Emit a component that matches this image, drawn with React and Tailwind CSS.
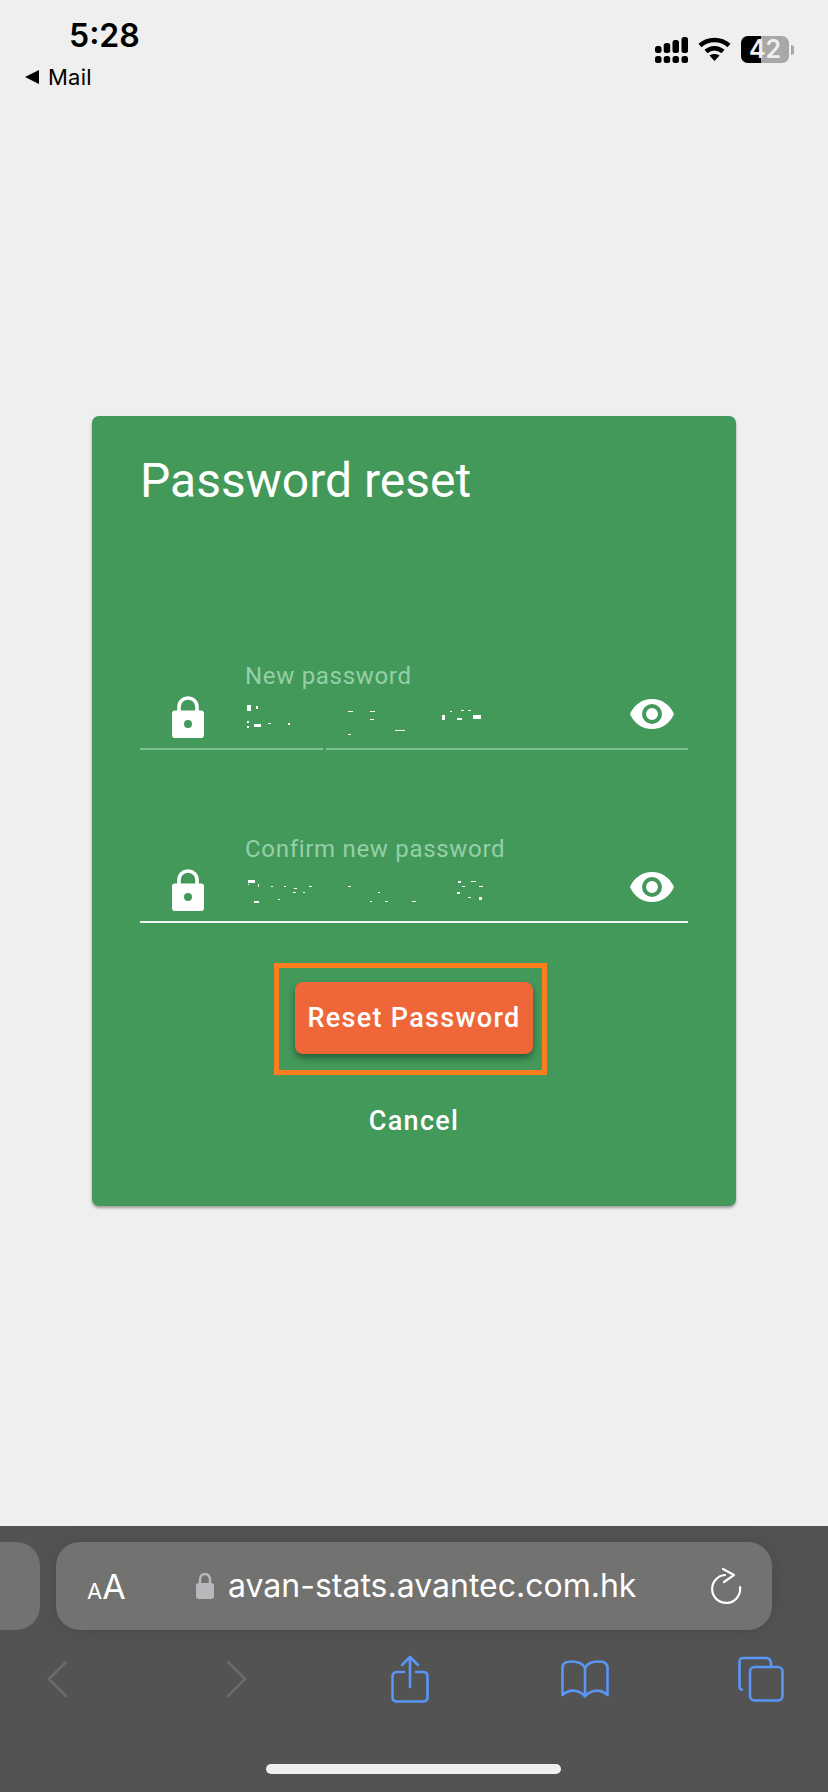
function Signal() {
  return (
    <svg width="33" height="26" viewBox="0 0 33 26" fill="#000">
      <rect x="0" y="9" width="6.5" height="7" rx="2.5" />
      <rect x="8.7" y="6" width="6.5" height="10" rx="2.5" />
      <rect x="17.5" y="3" width="6.5" height="13" rx="2.5" />
      <rect x="26.5" y="0" width="6.5" height="16" rx="2.5" />
      <rect x="0" y="19" width="6.5" height="7" rx="2.5" />
      <rect x="8.7" y="19" width="6.5" height="7" rx="2.5" />
      <rect x="17.5" y="19" width="6.5" height="7" rx="2.5" />
      <rect x="26.5" y="19" width="6.5" height="7" rx="2.5" />
    </svg>
  )
}

function Wifi() {
  return (
    <svg width="33" height="24" viewBox="0 0 33 24" fill="none" stroke="#000" strokeWidth="4.5">
      <path d="M2 8.5 C10 1 23 1 31 8.5" />
      <path d="M8 14.5 C13 10 20 10 25 14.5" />
      <path d="M16.5 24 L11.5 18.5 C14.5 16.5 18.5 16.5 21.5 18.5 Z" fill="#000" stroke="none" />
    </svg>
  )
}

function Battery() {
  return (
    <div className="flex items-center">
      <div className="relative flex h-[27px] w-[48px] items-center justify-center rounded-[7px] bg-[#a8a8a8]">
        <div className="absolute inset-y-0 left-0 w-[20px] rounded-l-[7px] bg-black" />
        <span className="relative text-[25px] leading-[27px] font-semibold text-[#efefef] font-['Inter',sans-serif]">42</span>
      </div>
      <div className="ml-[2px] h-[10px] w-[3px] rounded-r-full bg-[#a8a8a8]" />
    </div>
  )
}

function LockIcon() {
  return (
    <svg width="32" height="42" viewBox="0 0 32 42" fill="#fff">
      <path d="M7 16 V11 C7 5.5 11 2 16 2 C21 2 25 5.5 25 11 V16" fill="none" stroke="#fff" strokeWidth="3.6" />
      <path fillRule="evenodd" d="M3 14.5 H29 Q32 14.5 32 17.5 V39 Q32 42 29 42 H3 Q0 42 0 39 V17.5 Q0 14.5 3 14.5 Z M16 24 A4 4 0 1 0 16 32 A4 4 0 1 0 16 24 Z" />
    </svg>
  )
}

function EyeIcon() {
  return (
    <svg width="44" height="30" viewBox="0 0 44 30" fill="#fff">
      <path fillRule="evenodd" d="M22 0 C32 0 40 6 44 15 C40 24 32 30 22 30 C12 30 4 24 0 15 C4 6 12 0 22 0 Z M22 5 A10 10 0 1 0 22 25 A10 10 0 1 0 22 5 Z M22 9 A6 6 0 1 1 22 21 A6 6 0 1 1 22 9 Z" />
    </svg>
  )
}

// leftovers of the masked password text
const specksA = [
  [2, 0, 4, 6], [11, 1, 2, 3], [2, 16, 2, 2], [2, 21, 2, 2], [9, 19, 7, 3], [23, 18, 3, 1], [43, 18, 2, 2],
  [103, 6, 5, 1], [125, 6, 5, 1], [125, 14, 4, 1], [103, 29, 3, 1], [150, 25, 10, 1],
  [197, 10, 3, 5], [205, 6, 2, 1], [216, 5, 3, 1], [223, 5, 3, 1], [212, 13, 5, 2], [228, 10, 8, 4],
]
const specksB = [
  [3, 2, 7, 3], [3, 6, 1, 1], [13, 6, 1, 3], [26, 8, 2, 1], [39, 8, 2, 1], [49, 10, 3, 1], [48, 14, 3, 1], [58, 14, 2, 1], [64, 8, 3, 1],
  [9, 23, 5, 2], [33, 21, 2, 1], [103, 8, 3, 1], [133, 14, 2, 1], [125, 23, 2, 1], [140, 23, 3, 1], [167, 23, 4, 1],
  [213, 3, 3, 2], [226, 3, 5, 1], [217, 8, 3, 1], [234, 8, 4, 1], [212, 14, 3, 2], [223, 19, 3, 1], [234, 19, 3, 3],
]

function Specks({ items }) {
  return (
    <svg width="240" height="32" viewBox="0 0 240 32" fill="#fff" className="block">
      {items.map((s, i) => (
        <rect key={i} x={s[0]} y={s[1]} width={s[2]} height={s[3]} />
      ))}
    </svg>
  )
}

function Field({ label, specks, line, gap }) {
  return (
    <div className={`relative flex h-[98px] items-end border-b-2 pb-[10px] ${line}`}>
      <div className="flex w-[105px] justify-center pr-[9px]">
        <LockIcon />
      </div>
      <div className="flex-1 pb-[1px]">
        <div className="mb-[16px] text-[24px] leading-[26px] tracking-[0.7px] text-[#96cfa8]">{label}</div>
        <Specks items={specks} />
      </div>
      <div className="mr-[14px] mb-[9px]">
        <EyeIcon />
      </div>
      {gap && <div className="absolute -bottom-[2px] left-[183px] h-[2px] w-[3px] bg-[#43995a]" />}
    </div>
  )
}

export default function App() {
  return (
    <div className="flex h-[1792px] w-[828px] flex-col overflow-hidden bg-[#efefef] font-['Roboto',sans-serif]">
      <div className="flex h-[100px] justify-between">
        <div className="pt-[17px] pl-[25px] font-['Inter',sans-serif] text-black">
          <div className="pl-[44px] text-[32px] leading-[38px] font-semibold">5:28</div>
          <div className="mt-[9px] flex items-center gap-[9px] text-[22px] leading-[26px] tracking-[0.2px]">
            <span className="h-0 w-0 border-y-[7px] border-r-[14px] border-y-transparent border-r-black" />
            Mail
          </div>
        </div>
        <div className="flex items-start gap-[10px] pt-[36px] pr-[34px]">
          <div className="pt-[1px]"><Signal /></div>
          <div className="pt-[1px]"><Wifi /></div>
          <Battery />
        </div>
      </div>

      <div className="flex flex-1 justify-center pt-[316px]">
        <div className="h-[790px] w-[644px] rounded-[7px] bg-[#43995a] px-[48px] pt-[35px] shadow-[0_2px_3px_rgba(0,0,0,0.35)]">
          <h1 className="text-[48px] leading-[60px] text-white">Password reset</h1>
          <div className="mt-[141px]">
            <Field label="New password" specks={specksA} line="border-[#7cc295]" gap />
          </div>
          <div className="mt-[75px]">
            <Field label="Confirm new password" specks={specksB} line="border-[#eef5ef]" />
          </div>
          <div className="mt-[40px] flex flex-col items-center">
            <div className="mr-[7px] border-[5px] border-[#fb7f1f] pt-[14px] pr-[9px] pb-[16px] pl-[16px]">
              <button className="block h-[72px] w-[238px] rounded-[8px] bg-[#ef6639] text-[27px] font-medium tracking-[1.3px] text-white shadow-[0_4px_7px_rgba(0,0,0,0.4)]">
                Reset Password
              </button>
            </div>
            <button className="mt-[28px] text-[27px] leading-[36px] font-medium tracking-[1.3px] text-white">Cancel</button>
          </div>
        </div>
      </div>

      <div className="h-[266px] bg-[#535353] pt-[16px]">
        <div className="flex gap-[16px]">
          <div className="h-[88px] w-[40px] rounded-r-[24px] bg-[#727270]" />
          <div className="flex h-[88px] w-[716px] items-center rounded-[24px] bg-[#727270] pr-[30px] pl-[31px] text-white shadow-[0_0_20px_rgba(0,0,0,0.12)] font-['Inter',sans-serif]">
            <span className="flex w-[109px] items-baseline">
              <span className="text-[22px]">A</span>
              <span className="text-[34px]">A</span>
            </span>
            <svg width="18" height="26" viewBox="0 0 18 26" className="mr-[14px]" fill="#b8b8bc">
              <path d="M4 12 V7 C4 3 6 1 9 1 C12 1 14 3 14 7 V12" fill="none" stroke="#b8b8bc" strokeWidth="2.4" />
              <rect x="0" y="10" width="18" height="16" rx="3" />
            </svg>
            <span className="flex-1 text-[32px] leading-none whitespace-nowrap">avan-stats.avantec.com.hk</span>
            <svg width="32" height="38" viewBox="0 0 32 38" fill="none" stroke="#fff" strokeWidth="2.2" strokeLinecap="round" strokeLinejoin="round">
              <path d="M15 8 A14 14 0 1 0 30 20" />
              <path d="M13 2 L24 8 L14 15" />
            </svg>
          </div>
        </div>

        <div className="mt-[24px] flex h-[50px] items-center pl-[47px]">
          <svg width="20" height="36" viewBox="0 0 20 36" fill="none" stroke="#6b6b6b" strokeWidth="2.6" strokeLinecap="round" strokeLinejoin="round">
            <path d="M19 1 L2 18 L19 35" />
          </svg>
          <svg width="20" height="36" viewBox="0 0 20 36" fill="none" stroke="#6b6b6b" strokeWidth="2.6" strokeLinecap="round" strokeLinejoin="round" className="ml-[160px]">
            <path d="M1 1 L18 18 L1 35" />
          </svg>
          <svg width="38" height="48" viewBox="0 0 38 48" fill="none" stroke="#5a96f5" strokeWidth="2.6" strokeLinecap="round" strokeLinejoin="round" className="ml-[144px]">
            <path d="M19 32 V2 M11 10 L19 2 L27 10" />
            <path d="M13 17 H6 Q1.5 17 1.5 21.5 V42 Q1.5 46.5 6 46.5 H32 Q36.5 46.5 36.5 42 V21.5 Q36.5 17 32 17 H25" />
          </svg>
          <svg width="48" height="38" viewBox="0 0 48 38" fill="none" stroke="#5a96f5" strokeWidth="2.6" strokeLinejoin="round" className="ml-[132px]">
            <path d="M24 8 C22 3 16 1.5 10 1.5 C5 1.5 1.5 3 1.5 8 V35 C8 29 18 29 24 36.5 C30 29 40 29 46.5 35 V8 C46.5 3 43 1.5 38 1.5 C32 1.5 26 3 24 8 Z" />
            <path d="M24 8 V36" />
          </svg>
          <svg width="46" height="46" viewBox="0 0 46 46" fill="none" stroke="#5a96f5" strokeWidth="2.6" strokeLinejoin="round" className="ml-[129px]">
            <path d="M5 34 Q1.5 34 1.5 30 V6 Q1.5 2 5 2 H28 Q33 2 33 8 V11" />
            <rect x="12" y="11" width="32.5" height="33.5" rx="4.5" />
          </svg>
        </div>

        <div className="mt-[60px] flex justify-center pr-[1px]">
          <div className="h-[10px] w-[295px] rounded-full bg-[#efefef]" />
        </div>
      </div>
    </div>
  )
}
